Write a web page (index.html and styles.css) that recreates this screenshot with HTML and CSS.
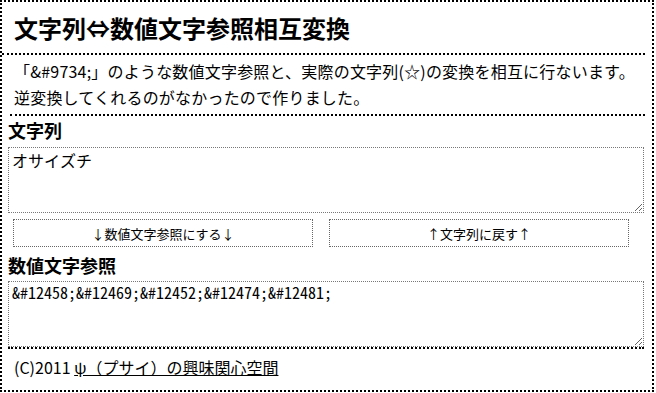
FILE: index.html
```html
<!DOCTYPE html>
<html lang="ja">
<head>
<meta charset="utf-8">
<title>文字列⇔数値文字参照相互変換</title>
<link rel="stylesheet" href="styles.css">
</head>
<body>
<div class="page">
  <header class="title">
    <h1>文字列⇔数値文字参照相互変換</h1>
  </header>
  <p class="lead">「&amp;#9734;」のような数値文字参照と、実際の文字列(☆)の変換を相互に行ないます。<br>逆変換してくれるのがなかったので作りました。</p>
  <form class="main">
    <h2 class="label">文字列</h2>
    <textarea class="box">オサイズチ</textarea>
    <div class="buttons">
      <button type="button" class="btn">↓数値文字参照にする↓</button>
      <button type="button" class="btn">↑文字列に戻す↑</button>
    </div>
    <h2 class="label label-second">数値文字参照</h2>
    <textarea class="box box-code">&amp;#12458;&amp;#12469;&amp;#12452;&amp;#12474;&amp;#12481;</textarea>
  </form>
  <footer class="foot">(C)2011 <a href="#" class="foot-link">ψ（プサイ）の興味関心空間</a></footer>
</div>
</body>
</html>
```

FILE: styles.css
```css
html, body {
  margin: 0;
  padding: 0;
  background: #fff;
}

body {
  font-family: "Noto Sans CJK JP", "Noto Sans", sans-serif;
  color: #000;
}

.page {
  box-sizing: border-box;
  width: 654px;
  height: 392px;
  border: 2px dotted #000;
}

.title {
  margin: 0 7px 0 0;
  border-bottom: 2px dotted #000;
}

.title h1 {
  margin: 0;
  padding-left: 12px;
  font-size: 24px;
  font-weight: bold;
  line-height: 51px;
}

.lead {
  margin: 0 7px 0 8px;
  padding: 3px 0 4px 4px;
  font-size: 16px;
  line-height: 26px;
  letter-spacing: 0.2px;
  border-bottom: 2px dotted #000;
}

.main {
  margin: 0 7px 0 6px;
  border-bottom: 2px dotted #000;
  display: flex;
  flex-direction: column;
  width: 636px;
}

.label {
  margin: 0 0 3px 0;
  font-size: 18px;
  font-weight: bold;
  line-height: 28px;
}

.label-second {
  margin: 4px 0 2px 0;
}

.box {
  box-sizing: border-box;
  display: block;
  width: 636px;
  height: 66px;
  margin: 0;
  padding: 2px 3px;
  border: 1px dotted #777;
  font-family: "Noto Sans Mono CJK JP", "Noto Sans CJK JP", monospace;
  font-size: 16px;
  line-height: 20px;
  color: #000;
  background: #fff;
  resize: vertical;
}

.box-code {
  padding-top: 0;
}

.buttons {
  display: flex;
  gap: 16px;
  margin: 6px 0 0 5px;
}

.btn {
  box-sizing: border-box;
  width: 300px;
  height: 28px;
  padding: 0;
  border: 1px dotted #666;
  background: #fff;
  color: #000;
  font-family: "Noto Sans CJK JP", sans-serif;
  font-size: 13px;
}

.foot {
  padding: 6px 0 0 12px;
  font-size: 16px;
  line-height: 24px;
}

.foot-link {
  color: #000;
  text-decoration: underline;
}
```
